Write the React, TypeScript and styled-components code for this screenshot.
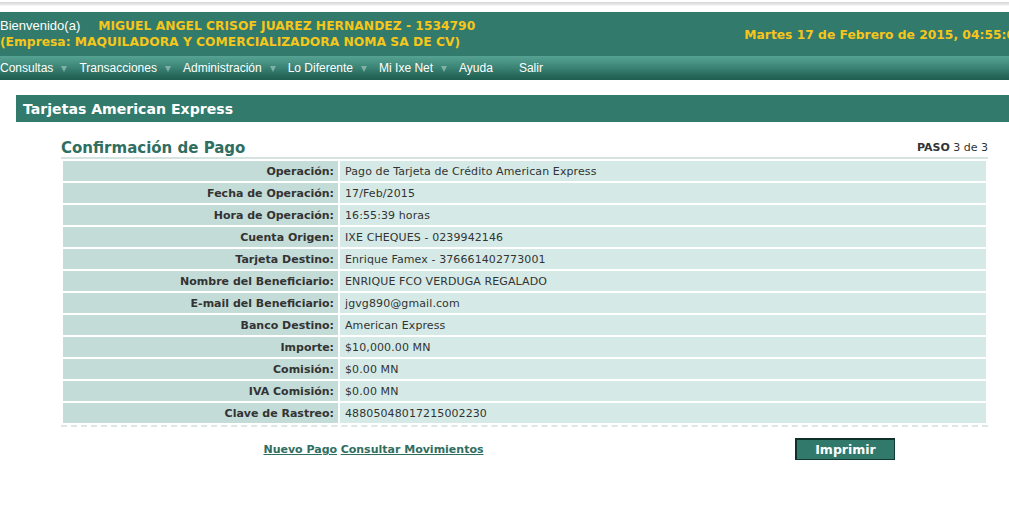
import React from "react";
import styled, { createGlobalStyle } from "styled-components";

const GlobalStyle = createGlobalStyle`
  body {
    margin: 0;
    background: #ffffff;
    font-family: "DejaVu Sans", Verdana, sans-serif;
    overflow: hidden;
  }
`;

const menu = [
  { label: "Consultas", arrow: true },
  { label: "Transacciones", arrow: true },
  { label: "Administración", arrow: true },
  { label: "Lo Diferente", arrow: true },
  { label: "Mi Ixe Net", arrow: true },
  { label: "Ayuda", arrow: false },
  { label: "Salir", arrow: false },
];

const rows: [string, string][] = [
  ["Operación:", "Pago de Tarjeta de Crédito American Express"],
  ["Fecha de Operación:", "17/Feb/2015"],
  ["Hora de Operación:", "16:55:39 horas"],
  ["Cuenta Origen:", "IXE CHEQUES - 0239942146"],
  ["Tarjeta Destino:", "Enrique Famex - 376661402773001"],
  ["Nombre del Beneficiario:", "ENRIQUE FCO VERDUGA REGALADO"],
  ["E-mail del Beneficiario:", "jgvg890@gmail.com"],
  ["Banco Destino:", "American Express"],
  ["Importe:", "$10,000.00 MN"],
  ["Comisión:", "$0.00 MN"],
  ["IVA Comisión:", "$0.00 MN"],
  ["Clave de Rastreo:", "48805048017215002230"],
];

function App() {
  return (
    <>
      <GlobalStyle />
      <S.TopStrip />
      <S.Header>
        <S.Welcome>
          <S.WelcomeLine>
            <S.Greeting>Bienvenido(a)</S.Greeting>
            <S.Yellow>MIGUEL ANGEL CRISOF JUAREZ HERNANDEZ - 1534790</S.Yellow>
          </S.WelcomeLine>
          <S.WelcomeLine>
            <S.Yellow>(Empresa: MAQUILADORA Y COMERCIALIZADORA NOMA SA DE CV)</S.Yellow>
          </S.WelcomeLine>
        </S.Welcome>
        <S.DateText>Martes 17 de Febrero de 2015, 04:55:0</S.DateText>
      </S.Header>
      <S.Nav>
        {menu.map((m) => (
          <S.NavItem key={m.label} $last={m.label === "Ayuda"}>
            {m.label}
            {m.arrow && <S.Arrow />}
          </S.NavItem>
        ))}
      </S.Nav>
      <S.SectionBar>Tarjetas American Express</S.SectionBar>
      <S.Content>
        <S.TitleRow>
          <S.Title>Confirmación de Pago</S.Title>
          <S.Step>
            <b>PASO</b> 3 de 3
          </S.Step>
        </S.TitleRow>
        <S.Table>
          <tbody>
            {rows.map(([k, v]) => (
              <tr key={k}>
                <S.Label>{k}</S.Label>
                <S.Value>{v}</S.Value>
              </tr>
            ))}
          </tbody>
        </S.Table>
        <S.Footer>
          <S.Links>
            <S.Link href="#">Nuevo Pago</S.Link> <S.Link href="#">Consultar Movimientos</S.Link>
          </S.Links>
          <S.PrintButton>Imprimir</S.PrintButton>
        </S.Footer>
      </S.Content>
    </>
  );
}

const S = {
  TopStrip: styled.div`
    height: 12px;
    background: linear-gradient(
      to bottom,
      #ffffff 0px,
      #ffffff 2px,
      #d6d6d6 2px,
      #ececec 5px,
      #ffffff 6px
    );
  `,
  Header: styled.div`
    height: 44px;
    background: #327a6b;
    display: flex;
    align-items: center;
    justify-content: space-between;
    white-space: nowrap;
    overflow: hidden;
  `,
  Welcome: styled.div`
    display: flex;
    flex-direction: column;
    gap: 1px;
  `,
  WelcomeLine: styled.div`
    display: flex;
    align-items: baseline;
    height: 16px;
  `,
  Greeting: styled.span`
    font-family: "Liberation Sans", Arial, sans-serif;
    font-size: 13px;
    color: #ffffff;
    margin-right: 18px;
  `,
  Yellow: styled.span`
    font-family: "DejaVu Sans", Verdana, sans-serif;
    font-weight: bold;
    font-size: 12.3px;
    color: #f6c61a;
  `,
  DateText: styled.span`
    font-weight: bold;
    font-size: 12.3px;
    color: #f6c61a;
    margin-top: 1px;
    margin-right: -6px;
  `,
  Nav: styled.div`
    height: 24px;
    display: flex;
    align-items: center;
    background: linear-gradient(to bottom, #56a393 0%, #3d8677 45%, #2a6e60 75%, #1f5d51 100%);
    font-family: "Liberation Sans", Arial, sans-serif;
    font-size: 12px;
    color: #ffffff;
  `,
  NavItem: styled.span<{ $last: boolean }>`
    display: flex;
    align-items: center;
    margin-right: ${({ $last }) => ($last ? "26px" : "12px")};
  `,
  Arrow: styled.span`
    width: 0;
    height: 0;
    margin-left: 8px;
    margin-top: 1px;
    border-left: 3px solid transparent;
    border-right: 3px solid transparent;
    border-top: 6px solid #7fb0a5;
  `,
  SectionBar: styled.div`
    margin: 15px 0 0 16px;
    height: 27px;
    background: #327a6b;
    color: #ffffff;
    font-weight: bold;
    font-size: 14.1px;
    line-height: 28px;
    padding-left: 7px;
  `,
  Content: styled.div`
    margin-left: 61px;
    width: 927px;
  `,
  TitleRow: styled.div`
    display: flex;
    justify-content: space-between;
    align-items: flex-end;
    margin-top: 17px;
    padding-bottom: 0;
    border-bottom: 2px solid #d5e3e0;
  `,
  Title: styled.span`
    font-weight: bold;
    font-size: 15px;
    color: #2f6e61;
  `,
  Step: styled.span`
    font-size: 11px;
    color: #333333;
    margin-bottom: 3px;
  `,
  Table: styled.table`
    width: 100%;
    border-collapse: separate;
    border-spacing: 2px;
    border-bottom: 2px dashed #dce8e5;
    font-size: 11px;
    color: #333333;
  `,
  Label: styled.td`
    width: 271px;
    height: 20px;
    padding: 0 4px 0 0;
    background: #c4dcd8;
    text-align: right;
    font-weight: bold;
  `,
  Value: styled.td`
    height: 20px;
    padding: 0 0 0 5px;
    background: #d5eae6;
    letter-spacing: 0.1px;
  `,
  Footer: styled.div`
    display: flex;
    align-items: center;
    margin-top: 11px;
  `,
  Links: styled.div`
    width: 625px;
    text-align: center;
    font-size: 11px;
    margin-top: 1px;
  `,
  Link: styled.a`
    color: #2f6e61;
    font-weight: bold;
  `,
  PrintButton: styled.button`
    margin-left: 109px;
    width: 100px;
    height: 22px;
    background: #317a6b;
    border: 1px solid #123a32;
    border-left: 2px solid #0f2f29;
    border-top: 2px solid #0f2f29;
    color: #ffffff;
    font-family: "DejaVu Sans", Verdana, sans-serif;
    font-weight: bold;
    font-size: 12.5px;
    padding: 0;
  `,
};

export default App;
